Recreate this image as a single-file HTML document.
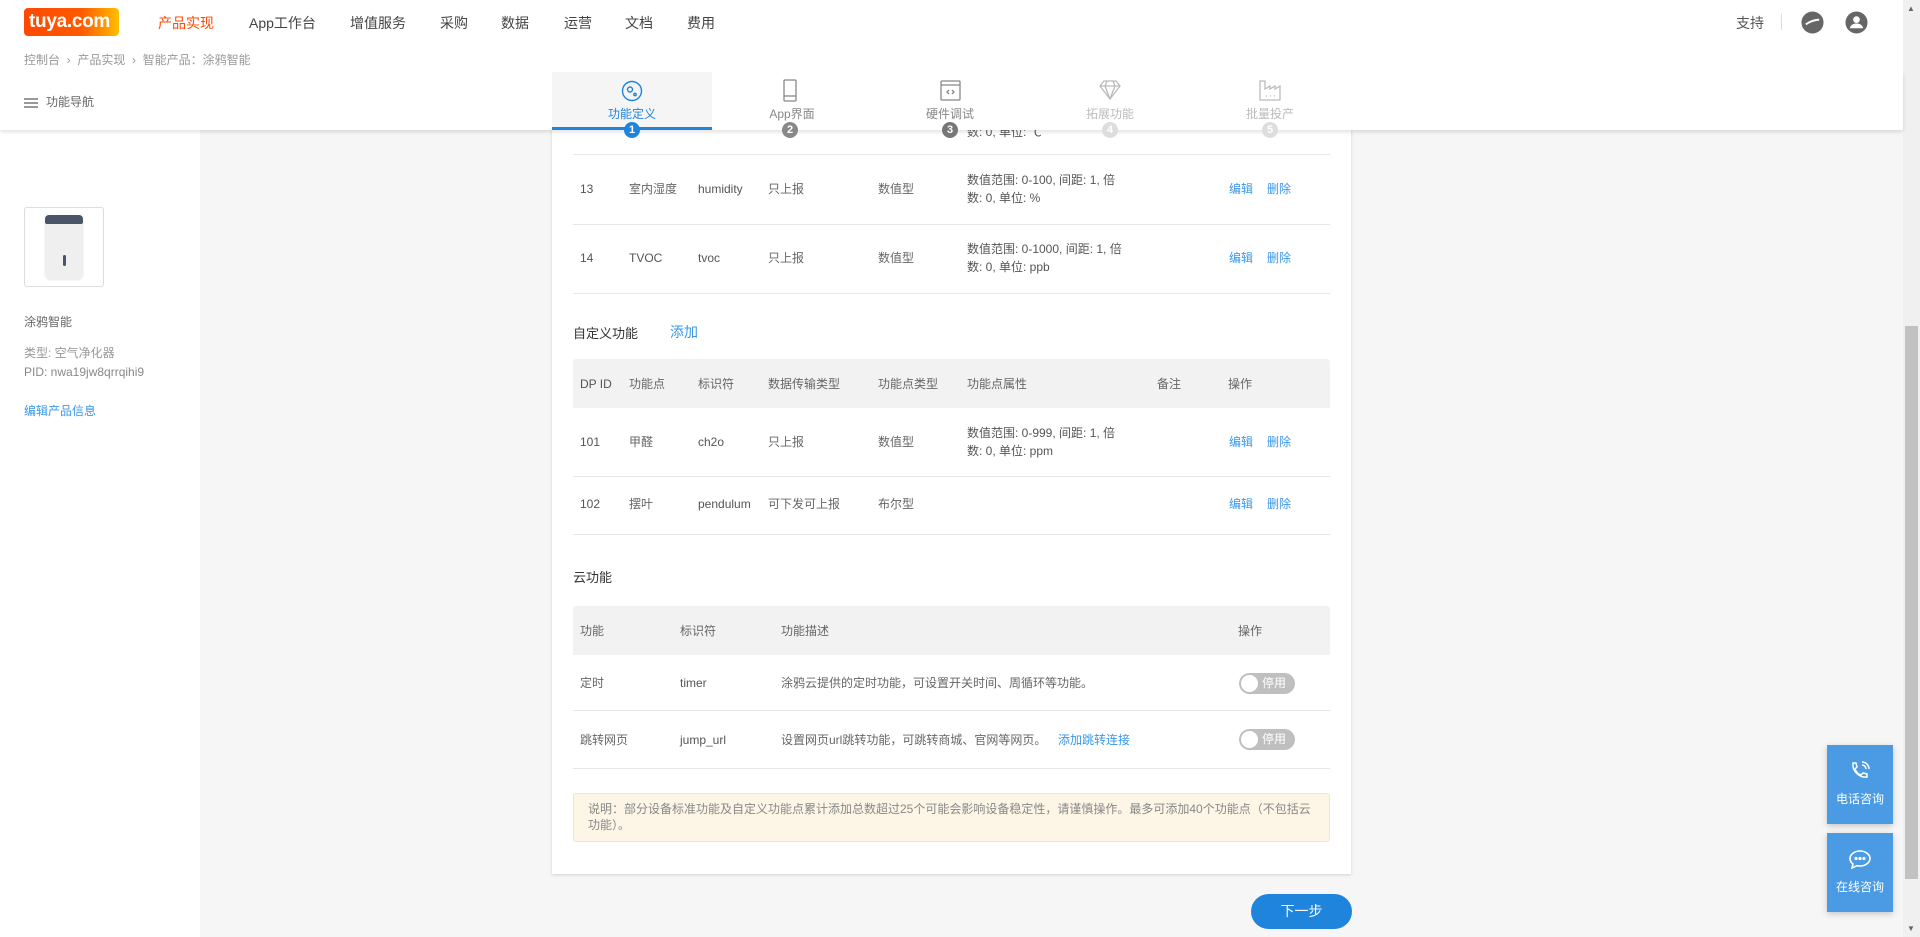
<!DOCTYPE html>
<html><head><meta charset="utf-8"><style>
*{box-sizing:border-box;margin:0;padding:0}
body{width:1920px;height:937px;overflow:hidden;background:#f6f6f6;font-family:"Liberation Sans","Noto Sans CJK SC",sans-serif;position:relative;color:#666}
.a{position:absolute;white-space:nowrap}
.t{font-size:12px;line-height:16px}
.line{position:absolute;left:573px;width:757px;height:1px;background:#e6e6e6}
.hdr{position:absolute;left:573px;width:757px;background:#f2f2f2;border-radius:3px 3px 0 0}
.blue{color:#3a97e8}
.dk{color:#555}
.tog{position:absolute;width:56px;height:21px;border-radius:11px;background:#bfbfbf}
.tog i{position:absolute;left:2px;top:2px;width:17px;height:17px;border-radius:50%;background:#fff}
.tog span{position:absolute;left:23px;top:3px;font-size:12px;color:#fff;line-height:15px}
.fb{position:absolute;left:1827px;width:66px;height:79px;background:#4a9be3;box-shadow:0 2px 6px rgba(0,0,0,.2);color:#fff;font-size:12px;text-align:center}
.num{position:absolute;top:122px;width:16px;height:16px;border-radius:50%;color:#fff;font-size:11px;font-weight:bold;text-align:center;line-height:16px}
.lab{position:absolute;top:33px;font-size:12px;width:160px;text-align:center}
</style></head><body>

<div class="a" style="left:0;top:72px;width:200px;height:865px;background:#fff"></div>
<div class="a" style="left:552px;top:100px;width:799px;height:774px;background:#fff;box-shadow:0 1px 3px rgba(0,0,0,.15)"></div>

<div class="a t dk" style="left:967px;top:124px">数: 0, 单位: ℃</div>
<div class="line" style="top:154px"></div>

<div class="a t dk" style="left:580px;top:181px">13</div>
<div class="a t" style="left:629px;top:181px">室内湿度</div>
<div class="a t dk" style="left:698px;top:181px">humidity</div>
<div class="a t" style="left:768px;top:181px">只上报</div>
<div class="a t" style="left:878px;top:181px">数值型</div>
<div class="a t dk" style="left:967px;top:171px;line-height:18px">数值范围: 0-100, 间距: 1, 倍<br>数: 0, 单位: %</div>
<div class="a t blue" style="left:1229px;top:181px">编辑</div><div class="a t blue" style="left:1267px;top:181px">删除</div>
<div class="line" style="top:224px"></div>

<div class="a t dk" style="left:580px;top:250px">14</div>
<div class="a t dk" style="left:629px;top:250px">TVOC</div>
<div class="a t dk" style="left:698px;top:250px">tvoc</div>
<div class="a t" style="left:768px;top:250px">只上报</div>
<div class="a t" style="left:878px;top:250px">数值型</div>
<div class="a t dk" style="left:967px;top:240px;line-height:18px">数值范围: 0-1000, 间距: 1, 倍<br>数: 0, 单位: ppb</div>
<div class="a t blue" style="left:1229px;top:250px">编辑</div><div class="a t blue" style="left:1267px;top:250px">删除</div>
<div class="line" style="top:293px"></div>

<div class="a" style="left:573px;top:323px;font-size:13px;color:#333">自定义功能</div>
<div class="a blue" style="left:670px;top:322px;font-size:14px">添加</div>

<div class="hdr" style="top:359px;height:49px"></div>
<div class="a t dk" style="left:580px;top:376px">DP ID</div>
<div class="a t" style="left:629px;top:376px">功能点</div>
<div class="a t" style="left:698px;top:376px">标识符</div>
<div class="a t" style="left:768px;top:376px">数据传输类型</div>
<div class="a t" style="left:878px;top:376px">功能点类型</div>
<div class="a t" style="left:967px;top:376px">功能点属性</div>
<div class="a t" style="left:1157px;top:376px">备注</div>
<div class="a t" style="left:1228px;top:376px">操作</div>

<div class="a t dk" style="left:580px;top:434px">101</div>
<div class="a t" style="left:629px;top:434px">甲醛</div>
<div class="a t dk" style="left:698px;top:434px">ch2o</div>
<div class="a t" style="left:768px;top:434px">只上报</div>
<div class="a t" style="left:878px;top:434px">数值型</div>
<div class="a t dk" style="left:967px;top:424px;line-height:18px">数值范围: 0-999, 间距: 1, 倍<br>数: 0, 单位: ppm</div>
<div class="a t blue" style="left:1229px;top:434px">编辑</div><div class="a t blue" style="left:1267px;top:434px">删除</div>
<div class="line" style="top:476px"></div>

<div class="a t dk" style="left:580px;top:496px">102</div>
<div class="a t" style="left:629px;top:496px">摆叶</div>
<div class="a t dk" style="left:698px;top:496px">pendulum</div>
<div class="a t" style="left:768px;top:496px">可下发可上报</div>
<div class="a t" style="left:878px;top:496px">布尔型</div>
<div class="a t blue" style="left:1229px;top:496px">编辑</div><div class="a t blue" style="left:1267px;top:496px">删除</div>
<div class="line" style="top:534px"></div>

<div class="a" style="left:573px;top:567px;font-size:13px;color:#333">云功能</div>
<div class="hdr" style="top:606px;height:49px"></div>
<div class="a t" style="left:580px;top:623px">功能</div>
<div class="a t" style="left:680px;top:623px">标识符</div>
<div class="a t" style="left:781px;top:623px">功能描述</div>
<div class="a t" style="left:1238px;top:623px">操作</div>

<div class="a t" style="left:580px;top:675px">定时</div>
<div class="a t dk" style="left:680px;top:675px">timer</div>
<div class="a t" style="left:781px;top:675px">涂鸦云提供的定时功能，可设置开关时间、周循环等功能。</div>
<div class="tog" style="left:1239px;top:673px"><i></i><span>停用</span></div>
<div class="line" style="top:710px"></div>

<div class="a t" style="left:580px;top:732px">跳转网页</div>
<div class="a t dk" style="left:680px;top:732px">jump_url</div>
<div class="a t" style="left:781px;top:732px">设置网页url跳转功能，可跳转商城、官网等网页。</div>
<div class="a t blue" style="left:1058px;top:732px">添加跳转连接</div>
<div class="tog" style="left:1239px;top:729px"><i></i><span>停用</span></div>
<div class="line" style="top:768px"></div>

<div class="a" style="left:573px;top:793px;width:757px;height:49px;background:#fdf6e6;border:1px solid #f9e6b8;border-radius:3px"></div>
<div class="a t" style="left:588px;top:801px;color:#888;line-height:16px;white-space:normal;width:730px">说明：部分设备标准功能及自定义功能点累计添加总数超过25个可能会影响设备稳定性，请谨慎操作。最多可添加40个功能点（不包括云功能）。</div>

<div class="a" style="left:1251px;top:894px;width:101px;height:35px;border-radius:18px;background:#1e84dc;color:#fff;font-size:14px;text-align:center;line-height:35px">下一步</div>

<div class="a" style="left:24px;top:207px;width:80px;height:80px;border:1px solid #ddd;border-radius:3px;background:#fff"></div>
<div class="a" style="left:45px;top:215px;width:38px;height:64px;background:#efeff0;border-radius:4px 4px 6px 6px;box-shadow:0 1px 2px rgba(0,0,0,.1)"></div>
<div class="a" style="left:45px;top:215px;width:38px;height:9px;background:#4a5565;border-radius:4px 4px 2px 2px"></div>
<div class="a" style="left:63px;top:255px;width:3px;height:11px;background:#4a5565;border-radius:2px"></div>
<div class="a" style="left:24px;top:313px;font-size:12px;color:#666">涂鸦智能</div>
<div class="a" style="left:24px;top:344px;font-size:12px;color:#999">类型: 空气净化器</div>
<div class="a" style="left:24px;top:365px;font-size:12px;color:#888">PID: nwa19jw8qrrqihi9</div>
<div class="a blue" style="left:24px;top:402px;font-size:12px">编辑产品信息</div>

<div class="a" style="left:0;top:72px;width:1903px;height:58px;background:#fff;box-shadow:0 2px 4px rgba(0,0,0,.12);z-index:5">
  <div class="a" style="left:24px;top:26px;width:14px;height:2px;background:#999;box-shadow:0 4px 0 #999,0 8px 0 #999"></div>
  <div class="a" style="left:46px;top:21px;font-size:12px;color:#666">功能导航</div>
  <div class="a" style="left:552px;top:0;width:160px;height:58px;background:#f5f5f5;border-bottom:3px solid #1e84dc"></div>
  <svg class="a" style="left:621px;top:8px" width="22" height="22" viewBox="0 0 22 22" fill="none" stroke="#1e84dc" stroke-width="1.4"><circle cx="11" cy="11" r="9.5"/><circle cx="9" cy="9.5" r="2.5"/><circle cx="14" cy="14.5" r="1.2"/></svg>
  <svg class="a" style="left:783px;top:7px" width="14" height="23" viewBox="0 0 14 23" fill="none" stroke="#888" stroke-width="1.3"><rect x="1" y="1" width="12" height="21" rx="1"/><line x1="1" y1="17" x2="13" y2="17"/></svg>
  <svg class="a" style="left:940px;top:8px" width="21" height="21" viewBox="0 0 21 21" fill="none" stroke="#888" stroke-width="1.3"><rect x="1" y="1" width="19" height="19" rx="1"/><line x1="1" y1="5" x2="20" y2="5"/><path d="M9 10l-2 2 2 2M12 10l2 2-2 2"/></svg>
  <svg class="a" style="left:1099px;top:8px" width="22" height="20" viewBox="0 0 22 20" fill="none" stroke="#bbb" stroke-width="1.3"><path d="M5 1h12l4 5-10 13L1 6z M1 6h20 M8 1l-2 5 5 13 5-13-2-5"/></svg>
  <svg class="a" style="left:1259px;top:8px" width="22" height="21" viewBox="0 0 22 21" fill="none" stroke="#bbb" stroke-width="1.3"><path d="M1 1v19h20V6l-5 3V6l-5 3V6l-5 3V1z"/><path d="M7 16h1M11 16h1M15 16h1"/></svg>
  <div class="lab" style="left:552px;color:#1e84dc">功能定义</div>
  <div class="lab" style="left:712px;color:#888">App界面</div>
  <div class="lab" style="left:870px;color:#888">硬件调试</div>
  <div class="lab" style="left:1030px;color:#bbb">拓展功能</div>
  <div class="lab" style="left:1190px;color:#bbb">批量投产</div>
</div>
<div class="num" style="left:624px;background:#1e84dc;z-index:6">1</div>
<div class="num" style="left:782px;background:#888;z-index:6">2</div>
<div class="num" style="left:942px;background:#777;z-index:6">3</div>
<div class="num" style="left:1102px;background:#ddd;z-index:6">4</div>
<div class="num" style="left:1262px;background:#ddd;z-index:6">5</div>

<div class="a" style="left:0;top:0;width:1903px;height:72px;background:#fff;z-index:7">
  <div class="a" style="left:24px;top:8px;width:95px;height:28px;border-radius:4px;background:linear-gradient(90deg,#ff4800 0%,#ff5a00 60%,#ff8a00 80%,#ffc000 100%)"></div>
  <div class="a" style="left:29px;top:11px;font-size:19px;font-weight:bold;color:#fff;letter-spacing:-0.3px">tuya.com</div>
  <div class="a" style="left:158px;top:13px;font-size:14px;color:#ff4800">产品实现</div>
  <div class="a" style="left:249px;top:13px;font-size:14px;color:#444">App工作台</div>
  <div class="a" style="left:350px;top:13px;font-size:14px;color:#444">增值服务</div>
  <div class="a" style="left:440px;top:13px;font-size:14px;color:#444">采购</div>
  <div class="a" style="left:501px;top:13px;font-size:14px;color:#444">数据</div>
  <div class="a" style="left:564px;top:13px;font-size:14px;color:#444">运营</div>
  <div class="a" style="left:625px;top:13px;font-size:14px;color:#444">文档</div>
  <div class="a" style="left:687px;top:13px;font-size:14px;color:#444">费用</div>
  <div class="a" style="left:24px;top:51px;font-size:12px;color:#999">控制台 &nbsp;›&nbsp; 产品实现 &nbsp;›&nbsp; 智能产品：涂鸦智能</div>
  <div class="a" style="left:1736px;top:13px;font-size:14px;color:#555">支持</div>
  <div class="a" style="left:1781px;top:14px;width:1px;height:16px;background:#ddd"></div>
  <svg class="a" style="left:1801px;top:11px" width="23" height="23" viewBox="0 0 24 24"><circle cx="12" cy="12" r="11.5" fill="#666"/><path d="M5 14c4-3 10-5 14-5" stroke="#fff" stroke-width="2" fill="none"/></svg>
  <svg class="a" style="left:1845px;top:11px" width="23" height="23" viewBox="0 0 24 24"><circle cx="12" cy="12" r="11.5" fill="#666"/><circle cx="12" cy="9" r="3.5" fill="#fff"/><path d="M5 18c1-4 4-5 7-5s6 1 7 5z" fill="#fff"/></svg>
</div>

<div class="fb" style="top:745px"><svg style="margin-top:16px" width="22" height="20" viewBox="0 0 22 20" fill="none" stroke="#fff" stroke-width="1.5"><path d="M4 2l3 0 1 4-2 2c1 3 3 5 6 6l2-2 4 1v3c-8 1-15-6-14-14z"/><path d="M13 4a4 4 0 0 1 4 4M13 1a7 7 0 0 1 7 7"/></svg><div style="margin-top:6px">电话咨询</div></div>
<div class="fb" style="top:833px"><svg style="margin-top:16px" width="24" height="20" viewBox="0 0 24 20" fill="none" stroke="#fff" stroke-width="1.6"><path d="M12 2c5.5 0 10 3.5 10 7.5S17.5 17 12 17c-1 0-2 0-3-.3L4 19l1-4C3 13.5 2 11.5 2 9.5 2 5.5 6.5 2 12 2z"/><circle cx="8" cy="9.5" r=".8" fill="#fff"/><circle cx="12" cy="9.5" r=".8" fill="#fff"/><circle cx="16" cy="9.5" r=".8" fill="#fff"/></svg><div style="margin-top:6px">在线咨询</div></div>

<div class="a" style="left:1903px;top:0;width:17px;height:937px;background:#f0f0f0"></div>
<div class="a" style="left:1905px;top:326px;width:13px;height:553px;background:#c1c1c1"></div>
<div class="a" style="left:1907px;top:4px;font-size:8px;color:#666">▲</div>
<div class="a" style="left:1907px;top:924px;font-size:8px;color:#666">▼</div>
</body></html>
